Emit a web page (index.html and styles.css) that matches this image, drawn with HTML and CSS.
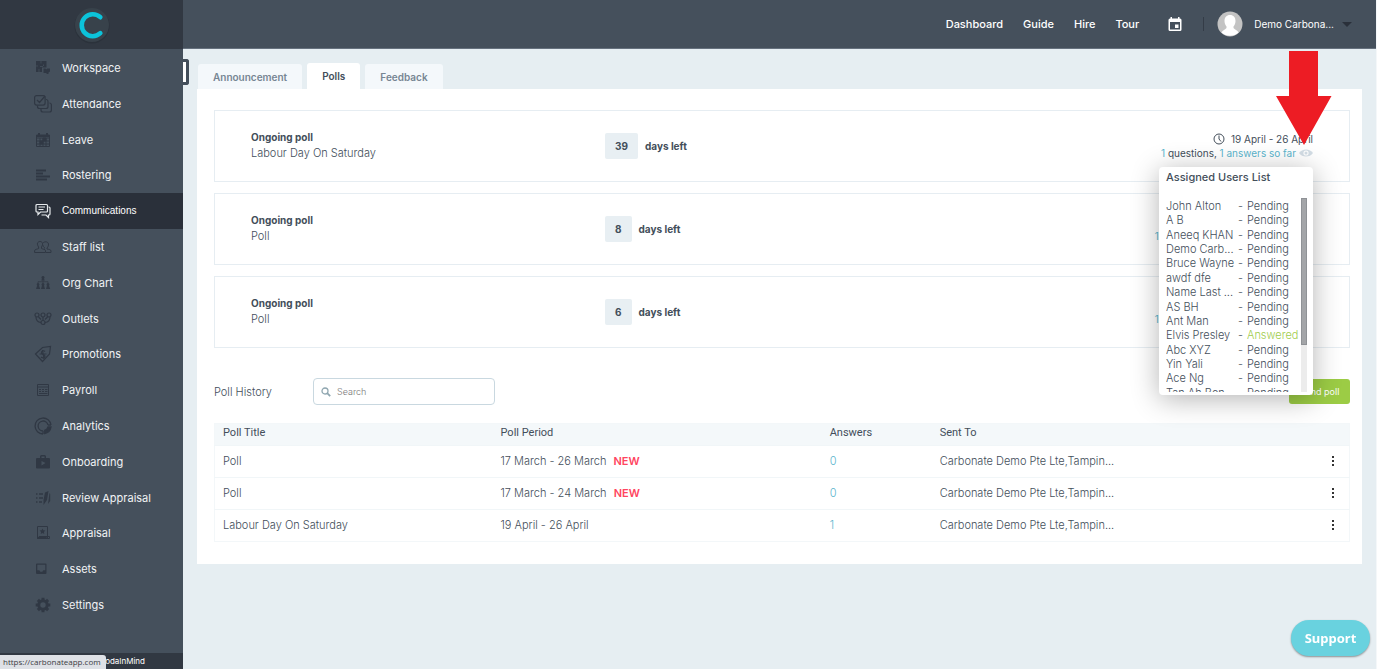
FILE: index.html
```html
<!DOCTYPE html>
<html lang="en">
<head>
    <meta charset="UTF-8">
    <meta name="viewport" content="width=device-width, initial-scale=1.0">
    <title>Carbonate - Polls</title>
    <link rel="stylesheet" href="styles.css">
</head>
<body>
    <div class="app">
        <!-- Sidebar -->
        <aside class="sidebar">
            <a href="#" class="logo" aria-label="Carbonate">
                <svg width="38" height="38" viewBox="0 0 38 38">
                    <circle cx="19" cy="20" r="17.5" fill="#2b323b"/>
                    <circle cx="19" cy="19" r="17" fill="#38424b"/>
                    <path d="M27.3 11.2A11 11 0 1 0 27.3 27.2" fill="none" stroke="#0cc3da" stroke-width="4.6" stroke-linecap="round"/>
                </svg>
            </a>
            <nav class="menu">
                <a href="#" class="menu-item">
                    <svg class="icon" viewBox="0 0 18 18"><path fill="currentColor" d="M2 2h10.500v6.500H8V13H2z"/><path fill="currentColor" d="M9.500 9.500h2l.8 1 .8-1H16v3l-1.500 1v1.500H13L12 14H9.500z"/><path stroke="#45505c" stroke-width=".8" fill="none" d="M7 2v2.500M2 7h2M6 7.500h3M9.500 5.500v1.500M5 10v3"/></svg>
                    Workspace</a>
                <a href="#" class="menu-item">
                    <svg class="icon" viewBox="0 0 18 18" fill="none" stroke="currentColor" stroke-width="1.200"><rect x=".6" y=".6" width="10.500" height="9.500" rx="2"/><path d="M3 5l2.500 2.500L11 1M3.500 10.500v1a2 2 0 0 0 2 2H12a2 2 0 0 0 2-2V6.500a2 2 0 0 0-2-2M7 14v1a2 2 0 0 0 2 2h6.400a2 2 0 0 0 2-2v-5a2 2 0 0 0-2-2"/></svg>
                    Attendance</a>
                <a href="#" class="menu-item">
                    <svg class="icon" viewBox="0 0 18 18" fill="none" stroke="currentColor"><path d="M2.500 4h13v11.500h-13zM2.500 7h13M2.500 10h13M2.500 13h13M6 7v8.500M9 7v8.500M12 7v8.500"/><path stroke-width="2" d="M3 5h12M5 2v3M13 2v3"/><path fill="currentColor" d="M6 10h3v3H6zM9 7h3v3H9z"/></svg>
                    Leave</a>
                <a href="#" class="menu-item">
                    <svg class="icon" viewBox="0 0 18 18" fill="none" stroke="currentColor" stroke-width="1.800"><path d="M2 4.500h10M2 7.500h7M2 10.500h14M2 13.500h11"/></svg>
                    Rostering</a>
                <a href="#" class="menu-item active">
                    <svg class="icon" viewBox="0 0 18 18" fill="none" stroke="currentColor" stroke-width="1.200"><path d="M3 2.500h9.500a1 1 0 0 1 1 1V9a1 1 0 0 1-1 1H6.500L4 12.500V10H3a1 1 0 0 1-1-1V3.500a1 1 0 0 1 1-1zM4.500 5h6.500M4.500 7.500h5M14.500 5h.5a1 1 0 0 1 1 1v6a1 1 0 0 1-1 1h-.5v2.500L12 13H7.500"/></svg>
                    Communications</a>
                <a href="#" class="menu-item">
                    <svg class="icon" viewBox="0 0 18 18" fill="none" stroke="currentColor"><path d="M.6 14.500v-2c0-1 3-1.500 4-2V9C2.500 6 3.500 3.500 6 3.500S9.500 6 7.500 9v1.500c1 .5 4 1 4 2v2zM9 5c1-1.500 5-2 5.500 1 .2 1.500-.5 3-1.500 4v1c2 .5 4 .5 4 2v1.500h-5M10.500 10.500V9.500C9.500 9 9 8 9 7"/></svg>
                    Staff list</a>
                <a href="#" class="menu-item">
                    <svg class="icon" viewBox="0 0 18 18"><path fill="currentColor" d="M9 2a1.600 1.600 0 0 1 1 2.800l.8 1.700H7.200L8 4.800A1.600 1.600 0 0 1 9 2zM4 9a1.500 1.500 0 0 1 1 2.600L6.200 15H2L3.200 11.600A1.500 1.500 0 0 1 4 9zm5 0a1.500 1.500 0 0 1 1 2.600l1 3.400H7l1-3.400A1.500 1.500 0 0 1 9 9zm5 0a1.500 1.500 0 0 1 1 2.600l1.200 3.400H12l1-3.400A1.500 1.500 0 0 1 14 9z"/><path fill="none" stroke="currentColor" stroke-width=".7" d="M9 6v3M4 9V7.700h10V9"/></svg>
                    Org Chart</a>
                <a href="#" class="menu-item">
                    <svg class="icon" viewBox="0 0 18 18" fill="none" stroke="currentColor" stroke-width="1.200"><circle cx="3" cy="5" r="2"/><circle cx="9" cy="5" r="2"/><circle cx="15" cy="5" r="2"/><circle cx="9" cy="12.500" r="2"/><path d="M9 7v3.500M2 7c0 3 1 5 5 5.500M16 7c0 3-1 5-5 5.500M4.500 7L7 9.500M13.500 7L11 9.500"/></svg>
                    Outlets</a>
                <a href="#" class="menu-item">
                    <svg class="icon" viewBox="0 0 18 18" fill="none" stroke="currentColor" stroke-width="1.200"><path d="M1.500 9l7-6.500 8-1-1 7.500-7 7.500z"/><path d="M11 6.500c-1.500-1.500-4-.5-3.500 1.500s4 1.500 3.500 3.500-3 1.500-4 .5M8.500 5l1.500 9M5.500 9h7"/></svg>
                    Promotions</a>
                <a href="#" class="menu-item">
                    <svg class="icon" viewBox="0 0 18 18" fill="none" stroke="currentColor"><path d="M3.500 3.500h11v11h-11zM3.500 6h11M5 8.500h2M8 8.500h2M11 8.500h2.500M5 10.500h2M8 10.500h2M11 10.500h2.500M5 12.500h8.500"/></svg>
                    Payroll</a>
                <a href="#" class="menu-item">
                    <svg class="icon" viewBox="0 0 18 18" fill="none" stroke="currentColor" stroke-width="1.300"><path d="M9 17A8 8 0 1 1 17 8M9 14A5 5 0 1 1 14 8M14 8h3M9 14v3"/><path fill="currentColor" d="M14 10h3c-.5 3.500-3 6-6.500 6.500v-3C12.500 13 13.500 12 14 10z"/></svg>
                    Analytics</a>
                <a href="#" class="menu-item">
                    <svg class="icon" viewBox="0 0 18 18"><path fill="currentColor" fill-rule="evenodd" d="M6 5V3.500A1.500 1.500 0 0 1 7.500 2h3A1.500 1.500 0 0 1 12 3.500V5h3a1 1 0 0 1 1 1v8.500a1 1 0 0 1-1 1H3a1 1 0 0 1-1-1V6a1 1 0 0 1 1-1zm1.500 0h3V3.500h-3zm0 3v4.500L11.500 10z"/></svg>
                    Onboarding</a>
                <a href="#" class="menu-item">
                    <svg class="icon" viewBox="0 0 18 18"><path fill="none" stroke="currentColor" stroke-width="1.400" d="M2 5h1.500M5 5h4M2 9h1.500M5 9h4M2 13h1.500M5 13h3"/><path fill="currentColor" d="M11 3.500l3.500-1.500-1.500 9-3.500 5V11zM15.500 4l.7 1v7l-2.200 3z"/></svg>
                    Review Appraisal</a>
                <a href="#" class="menu-item">
                    <svg class="icon" viewBox="0 0 18 18"><path fill="none" stroke="currentColor" d="M3.500 2.500h10v12h-10zM3.500 14.500l2-2h10v2z"/><path fill="currentColor" d="M8.500 4.500l.9 1.800 2 .3-1.500 1.400.4 2-1.800-1-1.800 1 .4-2-1.500-1.400 2-.3zM5 12h7l1 2H4z"/></svg>
                    Appraisal</a>
                <a href="#" class="menu-item">
                    <svg class="icon" viewBox="0 0 18 18"><path fill="currentColor" fill-rule="evenodd" d="M3 3.500h8.500a1 1 0 0 1 1 1V13a1 1 0 0 1-1 1H3a1 1 0 0 1-1-1V4.500a1 1 0 0 1 1-1zm.3 1.300v5.500h2l1 1.500h2l1-1.500h2V4.800z"/></svg>
                    Assets</a>
                <a href="#" class="menu-item">
                    <svg class="icon" viewBox="0 0 18 18"><circle cx="9" cy="9" r="4.200" fill="none" stroke="currentColor" stroke-width="3"/><path stroke="currentColor" stroke-width="3" d="M9 1.700v2.500M9 13.800v2.500M1.700 9h2.500M13.800 9h2.500M3.900 3.900l1.700 1.700M12.400 12.400l1.700 1.700M14.100 3.900l-1.700 1.700M3.900 14.100l1.700-1.700"/></svg>
                    Settings</a>
            </nav>
            <div class="sidebar-footer">&copy; CodaInMind</div>
            <button class="collapse" aria-label="Collapse menu"></button>
        </aside>

        <div class="main">
            <!-- Top bar -->
            <header class="topbar">
                <nav class="top-links">
                    <a href="#">Dashboard</a>
                    <a href="#">Guide</a>
                    <a href="#">Hire</a>
                    <a href="#">Tour</a>
                </nav>
                <button class="calendar" aria-label="Calendar">
                    <svg width="14" height="14" viewBox="0 0 14 14"><path fill="#fff" fill-rule="evenodd" d="M2.500 0H4v1.500h6V0h1.500v1.500H12a1.500 1.500 0 0 1 1.500 1.500v9.500A1.500 1.500 0 0 1 12 14H2A1.500 1.500 0 0 1 .5 12.500V3A1.500 1.500 0 0 1 2 1.500h.5zM2 5v7.500h10V5zm5 2.500h3.500V11H7z"/></svg>
                </button>
                <button class="user">
                    <svg class="avatar" width="26" height="26" viewBox="0 0 26 26">
                        <circle cx="13" cy="13" r="12.500" fill="#c3c3c3"/>
                        <path fill="#fff" d="M13 4c3.500 0 5.500 2.500 5.500 6 0 2.500-1 4.500-2 5.500v1.500c1 1.500 4 2 5 4.500a12.500 12.500 0 0 1-17 0c1-2.500 4-3 5-4.500v-1.500c-1-1-2-3-2-5.500C7.500 6.500 9.500 4 13 4z"/>
                    </svg>
                    <span>Demo Carbona...</span>
                    <span class="caret"></span>
                </button>
            </header>

            <main class="content">
                <div class="tabs" role="tablist">
                    <button class="tab" role="tab">Announcement</button>
                    <button class="tab selected" role="tab" aria-selected="true">Polls</button>
                    <button class="tab" role="tab">Feedback</button>
                </div>

                <section class="panel">
                    <!-- Ongoing polls -->
                    <div class="polls">
                        <article class="poll">
                            <div class="poll-name"><strong>Ongoing poll</strong><span>Labour Day On Saturday</span></div>
                            <div class="poll-days"><span class="count">39</span>days left</div>
                            <div class="poll-info">
                                <div class="dates">
                                    <svg width="12" height="12" viewBox="0 0 12 12" fill="none" stroke="#434e5a"><circle cx="6" cy="6" r="5"/><path d="M6 2.500V6l2 2.500"/></svg>
                                    19 April - 26 April
                                </div>
                                <div class="answers">
                                    <p><a href="#">1</a> questions, <a href="#">1 answers so far</a></p>
                                    <svg width="14" height="10" viewBox="0 0 14 10"><path d="M0 5C3 .2 11 .2 14 5 11 9.800 3 9.800 0 5z" fill="#d3dde5"/><circle cx="7" cy="5" r="2.600" fill="#fff"/><circle cx="7" cy="5" r="1.500" fill="#d3dde5"/></svg>
                                </div>

                                <!-- Assigned users popup -->
                                <div class="popup">
                                    <h3>Assigned Users List</h3>
                                    <div class="popup-body">
                                        <ul class="users">
                                            <li><span>John Alton</span>-<em>Pending</em></li>
                                            <li><span>A B</span>-<em>Pending</em></li>
                                            <li><span>Aneeq KHAN</span>-<em>Pending</em></li>
                                            <li><span>Demo Carb...</span>-<em>Pending</em></li>
                                            <li><span>Bruce Wayne</span>-<em>Pending</em></li>
                                            <li><span>awdf dfe</span>-<em>Pending</em></li>
                                            <li><span>Name Last ...</span>-<em>Pending</em></li>
                                            <li><span>AS BH</span>-<em>Pending</em></li>
                                            <li><span>Ant Man</span>-<em>Pending</em></li>
                                            <li><span>Elvis Presley</span>-<em class="done">Answered</em></li>
                                            <li><span>Abc XYZ</span>-<em>Pending</em></li>
                                            <li><span>Yin Yali</span>-<em>Pending</em></li>
                                            <li><span>Ace Ng</span>-<em>Pending</em></li>
                                            <li><span>Tan Ah Ben</span>-<em>Pending</em></li>
                                        </ul>
                                        <div class="scrollbar"><div class="thumb"></div></div>
                                    </div>
                                </div>
                                <svg class="arrow" width="56" height="94" viewBox="0 0 56 94"><path fill="#ed1c24" d="M13 0h29v45h13.500L28 94 0 45h13z"/></svg>
                            </div>
                        </article>
                        <article class="poll">
                            <div class="poll-name"><strong>Ongoing poll</strong><span>Poll</span></div>
                            <div class="poll-days"><span class="count">8</span>days left</div>
                            <div class="poll-info">
                                <div class="dates"></div>
                                <div class="answers">
                                    <p><a href="#">1</a> questions, <a href="#">10 answers so far</a></p>
                                    <svg width="14" height="10" viewBox="0 0 14 10"><path d="M0 5C3 .2 11 .2 14 5 11 9.800 3 9.800 0 5z" fill="#d3dde5"/></svg>
                                </div>
                            </div>
                        </article>
                        <article class="poll">
                            <div class="poll-name"><strong>Ongoing poll</strong><span>Poll</span></div>
                            <div class="poll-days"><span class="count">6</span>days left</div>
                            <div class="poll-info">
                                <div class="dates"></div>
                                <div class="answers">
                                    <p><a href="#">1</a> questions, <a href="#">10 answers so far</a></p>
                                    <svg width="14" height="10" viewBox="0 0 14 10"><path d="M0 5C3 .2 11 .2 14 5 11 9.800 3 9.800 0 5z" fill="#d3dde5"/></svg>
                                </div>
                            </div>
                        </article>
                    </div>

                    <!-- History -->
                    <div class="history-bar">
                        <label for="search">Poll History</label>
                        <div class="search">
                            <svg width="10" height="10" viewBox="0 0 10 10" fill="none" stroke="#8fa6b0"><circle cx="4" cy="4" r="3" stroke-width="1.300"/><path d="M6.200 6.200L9.200 9.200" stroke-width="1.800"/></svg>
                            <input type="text" id="search" placeholder="Search">
                        </div>
                        <button class="send">Send poll</button>
                    </div>

                    <table class="history">
                        <thead>
                            <tr><th class="col-title">Poll Title</th><th class="col-period">Poll Period</th><th class="col-answers">Answers</th><th>Sent To</th><th class="col-more"></th></tr>
                        </thead>
                        <tbody>
                            <tr>
                                <td>Poll</td>
                                <td>17 March - 26 March <b class="new">NEW</b></td>
                                <td><a href="#">0</a></td>
                                <td>Carbonate Demo Pte Lte,Tampin...</td>
                                <td><button class="more" aria-label="More"><i></i><i></i><i></i></button></td>
                            </tr>
                            <tr>
                                <td>Poll</td>
                                <td>17 March - 24 March <b class="new">NEW</b></td>
                                <td><a href="#">0</a></td>
                                <td>Carbonate Demo Pte Lte,Tampin...</td>
                                <td><button class="more" aria-label="More"><i></i><i></i><i></i></button></td>
                            </tr>
                            <tr>
                                <td>Labour Day On Saturday</td>
                                <td>19 April - 26 April</td>
                                <td><a href="#">1</a></td>
                                <td>Carbonate Demo Pte Lte,Tampin...</td>
                                <td><button class="more" aria-label="More"><i></i><i></i><i></i></button></td>
                            </tr>
                        </tbody>
                    </table>
                </section>
            </main>
        </div>
    </div>

    <button class="support">Support</button>
    <div class="status">https://carbonateapp.com</div>
</body>
</html>
```

FILE: styles.css
```css
* {
    box-sizing: border-box;
}
body {
    margin: 0;
    border-right: 1px solid #f4f7f9;
    font-family: Inter, "Liberation Sans", sans-serif;
    font-size: 11px;
    line-height: 16px;
    color: #434e5a;
    background: #e6eef2;
}
p {
    margin: 0;
}
a {
    color: #5bb5cd;
    text-decoration: none;
}
button {
    font: inherit;
    color: inherit;
    background: none;
    border: none;
    padding: 0;
    cursor: pointer;
}
svg {
    display: block;
    flex: none;
}
.app {
    display: flex;
    min-height: 100vh;
}

/* Sidebar */
.sidebar {
    position: relative;
    display: flex;
    flex-direction: column;
    flex: none;
    width: 183px;
    background: #45505c;
}
.logo {
    display: flex;
    justify-content: center;
    align-items: center;
    height: 49px;
    background: #313842;
}
.menu {
    display: flex;
    flex-direction: column;
    flex: 1;
    padding: 1px 0 30px;
}
.menu-item {
    display: flex;
    flex: 1;
    align-items: center;
    gap: 10px;
    padding-left: 34px;
    color: #f1f3f5;
}
.menu-item.active {
    background: #2a303a;
    color: #fff;
    font-family: "Liberation Sans", sans-serif;
    font-size: 10px;
}
.icon {
    width: 18px;
    height: 18px;
    color: #303844;
}
.active .icon {
    color: #e6e9ec;
}
.sidebar-footer {
    height: 16px;
    padding-right: 38px;
    background: #313842;
    color: #fff;
    font-size: 8px;
    text-align: right;
}
.collapse {
    position: absolute;
    top: 59px;
    left: 100%;
    width: 6px;
    height: 26px;
    background: #fff;
    border: 3px solid #434e5a;
    border-left: none;
    border-radius: 0 3px 3px 0;
}

/* Top bar */
.main {
    flex: 1;
    min-width: 0;
}
.topbar {
    display: flex;
    justify-content: flex-end;
    align-items: center;
    height: 49px;
    padding-right: 24px;
    background: #45505c;
    border-bottom: 1px solid #66717e;
    color: #fff;
    font-weight: 500;
}
.top-links {
    display: flex;
    gap: 20px;
}
.top-links a {
    color: #fff;
}
.calendar {
    margin-left: 29px;
}
.user {
    display: flex;
    align-items: center;
    gap: 8px;
    margin-left: 21px;
    padding-left: 14px;
    font-size: 10px;
    font-weight: 400;
    background: linear-gradient(#343c47, #343c47) left center / 1px 14px no-repeat;
}
.avatar {
    margin-right: 3px;
}
.caret {
    border: 5px solid transparent;
    border-top-color: #2a303a;
    border-bottom: none;
}

/* Content */
.content {
    padding: 14px;
}
.tabs {
    display: flex;
    align-items: flex-end;
    gap: 5px;
    padding-left: 1px;
}
.tab {
    height: 25px;
    padding: 0 15px;
    background: #f4f8fb;
    border-radius: 3px 3px 0 0;
    color: #778693;
    font-size: 10px;
    font-weight: 600;
}
.tab.selected {
    height: 26px;
    background: #fff;
    color: #434e5a;
}
.panel {
    padding: 21px 12px 22px 17px;
    background: #fff;
    font-weight: 300;
}
.polls {
    display: flex;
    flex-direction: column;
    gap: 11px;
}
.poll {
    display: flex;
    align-items: center;
    height: 72px;
    padding: 0 36px;
    border: 1px solid #e6edf2;
}
.poll-name {
    display: flex;
    flex-direction: column;
    width: 354px;
    padding-bottom: 2px;
}
.poll-name strong {
    font-size: 10px;
    font-weight: 700;
}
.poll-days {
    display: flex;
    align-items: center;
    gap: 7px;
    font-size: 10px;
    font-weight: 700;
}
.count {
    padding: 5px 10px;
    background: #e8eff3;
    border-radius: 2px;
}
.poll-info {
    position: relative;
    margin-left: auto;
    font-size: 10px;
    font-weight: 400;
}
.dates, .answers {
    display: flex;
    justify-content: flex-end;
    align-items: center;
    height: 14px;
    white-space: nowrap;
}
.dates {
    gap: 6px;
}
.answers {
    gap: 3px;
}

/* Assigned users popup */
.popup {
    position: absolute;
    z-index: 2;
    top: 35px;
    right: 0;
    width: 154px;
    height: 228px;
    padding: 2px 6px 3px 7px;
    background: #fff;
    border-radius: 4px;
    box-shadow: 0 4px 28px rgba(0, 0, 0, 0.3);
    font-size: 11px;
    font-weight: 300;
}
.popup h3 {
    margin: 0 0 13px;
    font-size: 11px;
    font-weight: 500;
}
.popup-body {
    display: flex;
    height: 194px;
    justify-content: space-between;
    overflow: hidden;
}
.users {
    display: flex;
    flex-direction: column;
    height: 201px;
    margin: 0;
    padding: 0;
    list-style: none;
    white-space: nowrap;
}
.users li {
    display: flex;
    flex: 1;
    gap: 4px;
    min-height: 0;
}
.users span {
    width: 68px;
}
.users em {
    font-style: normal;
}
.users .done {
    color: #a1cd4c;
}
.scrollbar {
    width: 6px;
    background: #ececec;
}
.thumb {
    height: 76%;
    background: #a3a5a8;
    border: 1px solid #8f9296;
}
.arrow {
    position: absolute;
    z-index: 3;
    bottom: 15px;
    right: -19px;
}

/* History */
.history-bar {
    display: flex;
    align-items: center;
    margin: 30px 0 18px;
}
.history-bar label {
    width: 99px;
}
.search {
    display: flex;
    align-items: center;
    gap: 6px;
    width: 182px;
    height: 27px;
    padding-left: 7px;
    border: 1px solid #c9d8e0;
    border-radius: 4px;
}
.search input {
    flex: 1;
    min-width: 0;
    padding: 0;
    border: none;
    outline: none;
    background: none;
    font: inherit;
    font-size: 9px;
}
.search input::placeholder {
    color: #777;
}
.send {
    width: 61px;
    height: 25px;
    margin-left: auto;
    background: #9ccc45;
    border-radius: 3px;
    color: #fff;
    font-size: 9px;
    font-weight: 400;
}
.history {
    width: 100%;
    border-collapse: collapse;
    table-layout: fixed;
    border: 1px solid #f3f7f9;
}
.history th, .history td {
    text-align: left;
    font-weight: inherit;
}
.history th {
    height: 22px;
    padding: 0 8px 3px;
    background: #f4f8fa;
    font-family: Roboto, sans-serif;
    font-weight: 400;
}
.history td {
    height: 32px;
    padding: 0 8px 1px;
    border-top: 1px solid #f1f6f8;
}
.history .col-title {
    width: 278px;
}
.history .col-period {
    width: 29%;
}
.history .col-answers {
    width: 110px;
}
.history .col-more {
    width: 30px;
}
.new {
    margin-left: 4px;
    color: #ff4560;
    font-weight: 600;
}
.more {
    display: flex;
    flex-direction: column;
    gap: 2px;
    padding: 4px;
}
.more i {
    width: 2px;
    height: 2px;
    background: #333;
}

.support {
    position: fixed;
    right: 7px;
    bottom: 13px;
    width: 79px;
    height: 36px;
    background: #69d2df;
    border-radius: 18px;
    box-shadow: 0 1px 2px rgba(0, 0, 0, 0.4);
    color: #fff;
    font-family: "Noto Sans", sans-serif;
    font-size: 13px;
    font-weight: 700;
}
.status {
    position: fixed;
    left: 0;
    bottom: 0;
    height: 14px;
    padding: 0 5px 0 3px;
    background: #dee1e6;
    border-top-right-radius: 3px;
    color: #3c4043;
    font-family: "Open Sans", sans-serif;
    font-size: 8px;
    line-height: 14px;
}
```
